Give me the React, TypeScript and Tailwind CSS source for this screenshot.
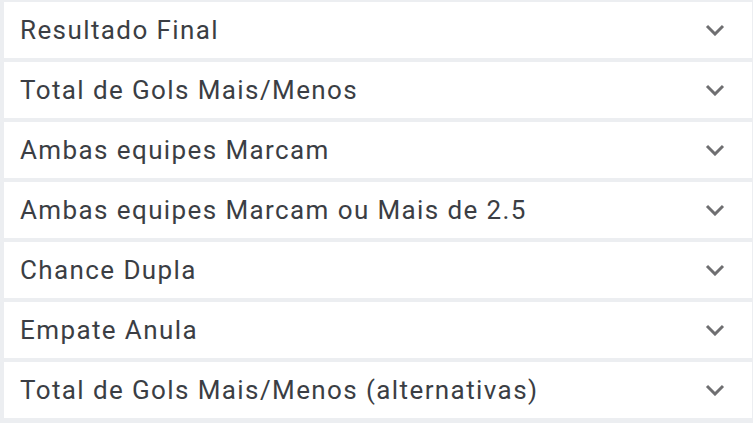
const markets = [
  'Resultado Final',
  'Total de Gols Mais/Menos',
  'Ambas equipes Marcam',
  'Ambas equipes Marcam ou Mais de 2.5',
  'Chance Dupla',
  'Empate Anula',
  'Total de Gols Mais/Menos (alternativas)',
];

function Chevron() {
  return (
    <svg width="20" height="12" viewBox="0 0 20 12" fill="none" className="shrink-0">
      <polyline points="2,2 10,10 18,2" stroke="#6f6f71" strokeWidth="3" strokeLinejoin="miter" />
    </svg>
  );
}

export default function App() {
  return (
    <div className="w-[753px] h-[423px] bg-[#eceef1] pt-[2px] pl-[4px] pr-[1px] font-['Roboto',sans-serif]">
      <div className="flex flex-col gap-[4px]">
        {markets.map((m) => (
          <button
            key={m}
            type="button"
            className="flex items-center justify-between h-[56px] bg-white pl-[16px] pr-[27px] text-left"
          >
            <span className="text-[26px] tracking-[1.4px] text-[#3b3e44] leading-none">{m}</span>
            <Chevron />
          </button>
        ))}
      </div>
    </div>
  );
}
